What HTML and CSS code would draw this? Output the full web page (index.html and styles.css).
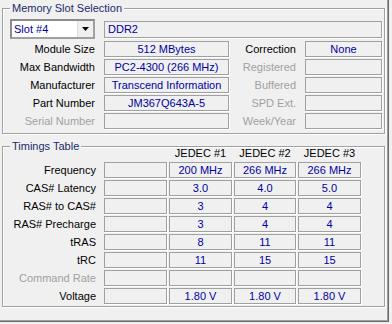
FILE: index.html
```html
<!DOCTYPE html>
<html>
<head>
  <title>SPD - Memory</title>
  <link rel="stylesheet" href="styles.css">
</head>
<body>
  <div class="tab">
    <fieldset class="group slot">
      <legend>Memory Slot Selection</legend>
      <div class="slot-grid">
        <div class="combo">
          <span class="combo-text">Slot #4</span>
          <span class="drop">
            <svg width="7" height="4" viewBox="0 0 7 4"><polygon points="0,0 7,0 3.5,4" fill="#000"/></svg>
          </span>
        </div>
        <div class="field type">DDR2</div>

        <span class="lbl">Module Size</span>
        <div class="field">512 MBytes</div>
        <span class="lbl">Correction</span>
        <div class="field">None</div>

        <span class="lbl">Max Bandwidth</span>
        <div class="field">PC2-4300 (266 MHz)</div>
        <span class="lbl off">Registered</span>
        <div class="field"></div>

        <span class="lbl">Manufacturer</span>
        <div class="field">Transcend Information</div>
        <span class="lbl off">Buffered</span>
        <div class="field"></div>

        <span class="lbl">Part Number</span>
        <div class="field">JM367Q643A-5</div>
        <span class="lbl off">SPD Ext.</span>
        <div class="field"></div>

        <span class="lbl off">Serial Number</span>
        <div class="field"></div>
        <span class="lbl off">Week/Year</span>
        <div class="field"></div>
      </div>
    </fieldset>

    <fieldset class="group timings">
      <legend>Timings Table</legend>
      <div class="timing-grid">
        <span class="head"></span>
        <span class="head"></span>
        <span class="head">JEDEC #1</span>
        <span class="head">JEDEC #2</span>
        <span class="head">JEDEC #3</span>

        <span class="lbl">Frequency</span>
        <div class="field"></div>
        <div class="field">200 MHz</div>
        <div class="field">266 MHz</div>
        <div class="field">266 MHz</div>

        <span class="lbl">CAS# Latency</span>
        <div class="field"></div>
        <div class="field">3.0</div>
        <div class="field">4.0</div>
        <div class="field">5.0</div>

        <span class="lbl">RAS# to CAS#</span>
        <div class="field"></div>
        <div class="field">3</div>
        <div class="field">4</div>
        <div class="field">4</div>

        <span class="lbl">RAS# Precharge</span>
        <div class="field"></div>
        <div class="field">3</div>
        <div class="field">4</div>
        <div class="field">4</div>

        <span class="lbl">tRAS</span>
        <div class="field"></div>
        <div class="field">8</div>
        <div class="field">11</div>
        <div class="field">11</div>

        <span class="lbl">tRC</span>
        <div class="field"></div>
        <div class="field">11</div>
        <div class="field">15</div>
        <div class="field">15</div>

        <span class="lbl off">Command Rate</span>
        <div class="field"></div>
        <div class="field"></div>
        <div class="field"></div>
        <div class="field"></div>

        <span class="lbl">Voltage</span>
        <div class="field"></div>
        <div class="field">1.80 V</div>
        <div class="field">1.80 V</div>
        <div class="field">1.80 V</div>
      </div>
    </fieldset>
  </div>
</body>
</html>
```

FILE: styles.css
```css
body {
  margin: 0;
  background: #f0f0f0;
  font-family: 'Liberation Sans', Arial, sans-serif;
  font-size: 11px;
  color: #000;
}
.tab {
  width: 389px;
  height: 322px;
  padding-top: 1px;
  box-sizing: border-box;
  border-right: 1px solid #696969;
  border-bottom: 1px solid #696969;
  box-shadow: inset -1px -1px 0 #a0a0a0;
}
.group {
  margin: 0 3px 0 2px;
  padding: 4px 3px 4px 7px;
  border: 1px solid #a0a0a0;
  box-shadow: inset 1px 1px 0 #fff, 1px 1px 0 #fff;
  min-width: 0;
}
legend {
  padding: 0 2px;
  line-height: 14px;
  color: #1a2b6b;
  background: #f0f0f0;
}
.timings {
  margin-top: 5px;
  padding-top: 0;
  padding-bottom: 2px;
}
.slot-grid {
  display: grid;
  grid-template-columns: 85px 125px 58px 77px;
  grid-template-rows: 20px repeat(5, 16px);
  column-gap: 9px;
  row-gap: 2px;
}
.timing-grid {
  display: grid;
  grid-template-columns: 92px 63px 63px 62px 63px;
  grid-template-rows: 13px repeat(8, 16px);
  column-gap: 2px;
  row-gap: 2px;
  margin-top: -6px;
}
.lbl {
  text-align: right;
  line-height: 16px;
  white-space: nowrap;
}
.timing-grid .lbl {
  padding-right: 6px;
}
.off {
  color: #a0a0a0;
}
.head {
  text-align: center;
  line-height: 13px;
  white-space: nowrap;
}
.field {
  box-sizing: border-box;
  height: 16px;
  border: 1px solid #a0a0a0;
  box-shadow: 1px 1px 0 #fff;
  line-height: 14px;
  text-align: center;
  color: #0000a0;
  white-space: nowrap;
  overflow: hidden;
}
.field.type {
  grid-column: 2 / -1;
  height: 17px;
  margin-top: 2px;
  line-height: 15px;
  text-align: left;
  padding-left: 3px;
}
.combo {
  display: flex;
  box-sizing: border-box;
  height: 20px;
  border: 2px solid #a0a0a0;
  border-top-color: #8c8c8c;
  border-left-color: #8c8c8c;
  background: #fff;
}
.combo-text {
  flex: 1;
  padding-left: 2px;
  line-height: 16px;
  color: #0000a0;
}
.drop {
  display: flex;
  align-items: center;
  justify-content: center;
  width: 15px;
  background: #f0f0f0;
  border-left: 1px solid #dcdcdc;
}
```
